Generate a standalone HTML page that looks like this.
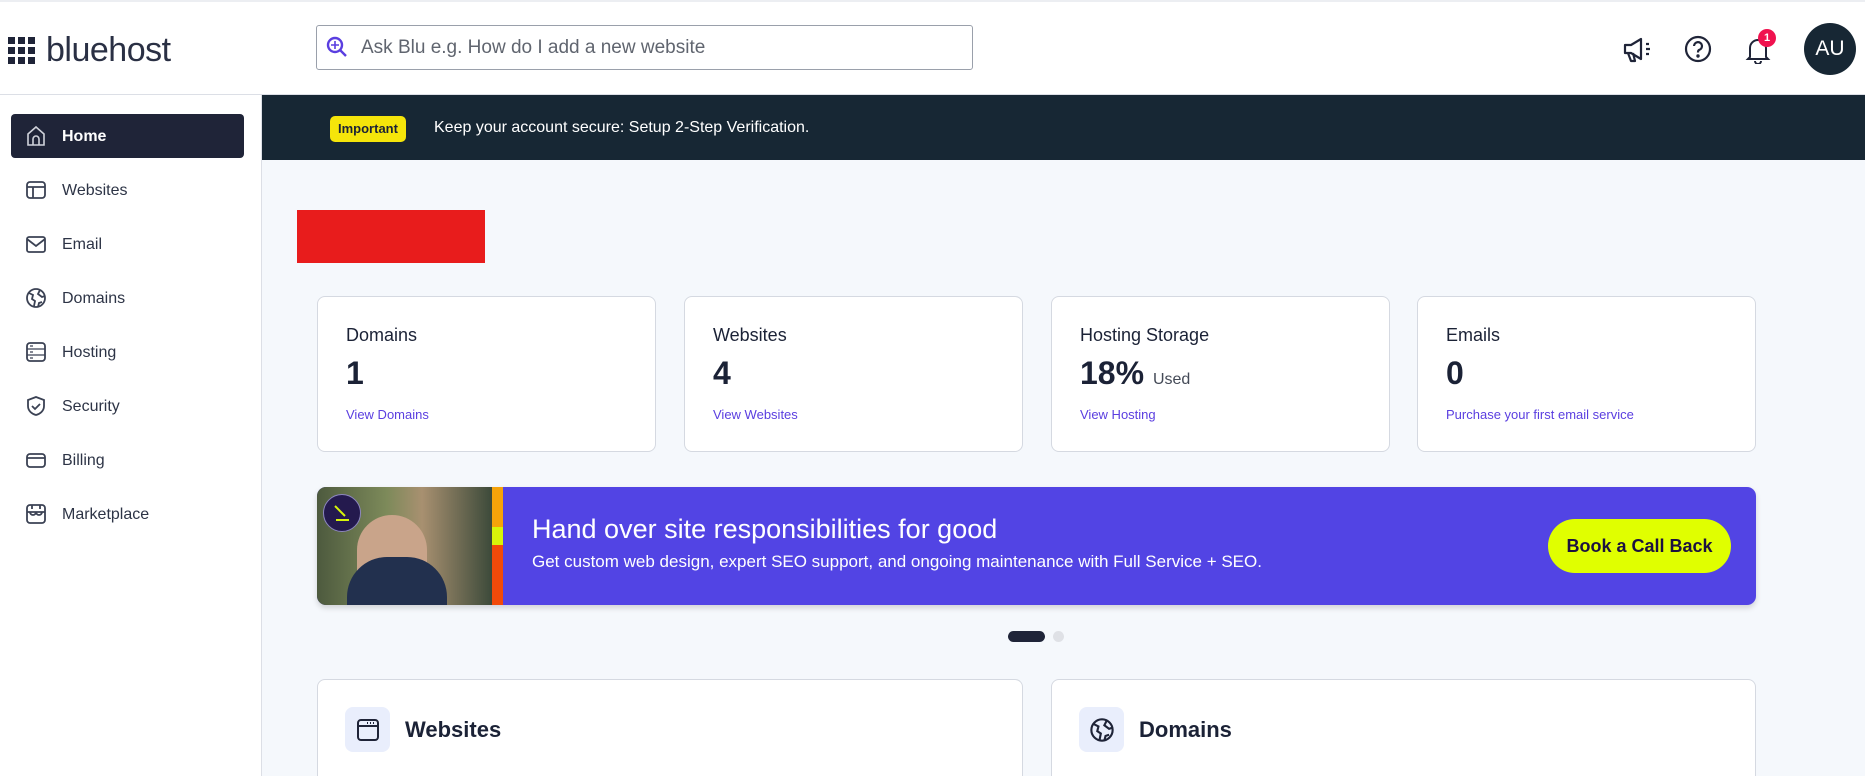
<!DOCTYPE html>
<html style="width:1865px;height:776px;overflow:hidden"><head><meta charset="utf-8">
<style>
*{box-sizing:border-box;margin:0;padding:0}
body{width:1865px;height:776px;overflow:hidden;background:#f5f8fc;font-family:"Liberation Sans",sans-serif;color:#1b2236;position:relative}
.hdr{position:absolute;left:0;top:0;width:1865px;height:95px;background:#fff;border-top:2px solid #eceef2;border-bottom:1px solid #dcdfe6}
.side{position:absolute;left:0;top:95px;width:262px;height:681px;background:#fff;border-right:1px solid #dcdfe6}
.nav{position:absolute;left:11px;width:233px;height:44px;border-radius:4px;font-size:16px;color:#2d3446}
.nav svg{position:absolute;left:14px;top:11px}
.nav span{position:absolute;left:51px;top:14px}
.nav.on{background:#1f2438;color:#fff;font-weight:bold}
.card{position:absolute;background:#fff;border:1px solid #d5d9e1;border-radius:8px}
.ct{position:absolute;left:28px;top:28px;font-size:18px;color:#1b2236}
.cn{position:absolute;left:28px;top:58px;font-size:32px;font-weight:bold;color:#1b2236}
.cl{position:absolute;left:28px;top:110px;font-size:13px;color:#5a3ee0}
</style></head><body>
<div class="hdr">
  <svg style="position:absolute;left:8px;top:35px" width="28" height="28" viewBox="0 0 28 28" fill="#1f2438">
    <rect x="0" y="0" width="7" height="7"/><rect x="10" y="0" width="7" height="7"/><rect x="20" y="0" width="7" height="7"/>
    <rect x="0" y="10" width="7" height="7"/><rect x="10" y="10" width="7" height="7"/><rect x="20" y="10" width="7" height="7"/>
    <rect x="0" y="20" width="7" height="7"/><rect x="10" y="20" width="7" height="7"/><rect x="20" y="20" width="7" height="7"/>
  </svg>
  <div style="position:absolute;left:46px;top:29px;font-size:34px;color:#2a3044;letter-spacing:-0.5px">bluehost</div>
  <div style="position:absolute;left:316px;top:23px;width:657px;height:45px;border:1px solid #9aa0ab;border-radius:3px">
    <svg style="position:absolute;left:9px;top:10px" width="22" height="22" viewBox="0 0 22 22" fill="none" stroke="#5a3ee0" stroke-width="2.4"><circle cx="9" cy="9" r="7"/><path d="M14 14l6 6"/><path d="M9 5v8M5 9h8" stroke-width="1.6"/></svg>
    <div style="position:absolute;left:44px;top:11px;font-size:19px;color:#60656f">Ask Blu e.g. How do I add a new website</div>
  </div>
  <svg style="position:absolute;left:1623px;top:34px" width="30" height="28" viewBox="0 0 30 28" fill="none" stroke="#1f2438" stroke-width="2.2" stroke-linejoin="round"><path d="M2 9h6l10-6v20L8 17H2z"/><path d="M5 17l3 8h4l-2-8"/><path d="M23 8h3M23 13h4M23 18h3"/></svg>
  <svg style="position:absolute;left:1684px;top:33px" width="28" height="28" viewBox="0 0 28 28" fill="none" stroke="#1f2438" stroke-width="2.2"><circle cx="14" cy="14" r="12"/><path d="M10 11a4 4 0 1 1 5 4c-1 .5-1 1.5-1 2.5"/><circle cx="14" cy="21" r=".6" fill="#1f2438"/></svg>
  <svg style="position:absolute;left:1745px;top:34px" width="26" height="28" viewBox="0 0 26 28" fill="none" stroke="#1f2438" stroke-width="2"><path d="M5 21V12a8 8 0 0 1 16 0v9l2 2H3z"/><path d="M10 25a3 3 0 0 0 6 0"/></svg>
  <div style="position:absolute;left:1758px;top:27px;width:18px;height:18px;border-radius:50%;background:#f0124f;color:#fff;font-size:11px;font-weight:bold;text-align:center;line-height:18px">1</div>
  <div style="position:absolute;left:1804px;top:21px;width:52px;height:52px;border-radius:50%;background:#172734;color:#fff;font-size:21px;text-align:center;line-height:52px">AU</div>
</div>
<div class="side">
  <div class="nav on" style="top:19px"><svg width="22" height="22" viewBox="0 0 22 22" fill="none" stroke="#cfd2da" stroke-width="1.6"><path d="M3 20V9l8-7 8 7v11z"/><path d="M8 20v-6a3 3 0 0 1 6 0v6"/></svg><span>Home</span></div>
  <div class="nav" style="top:73px"><svg width="22" height="22" viewBox="0 0 22 22" fill="none" stroke="#3b4254" stroke-width="1.8"><rect x="2" y="3" width="18" height="16" rx="3"/><path d="M2 8h18M8 8v11"/></svg><span>Websites</span></div>
  <div class="nav" style="top:127px"><svg width="22" height="22" viewBox="0 0 22 22" fill="none" stroke="#3b4254" stroke-width="1.8"><rect x="2" y="4" width="18" height="15" rx="2"/><path d="M2 6l9 7 9-7"/></svg><span>Email</span></div>
  <div class="nav" style="top:181px"><svg width="22" height="22" viewBox="0 0 22 22" fill="none" stroke="#3b4254" stroke-width="1.8"><circle cx="11" cy="11" r="9"/><path d="M4 6l4 2-1 4 3 2-1 5M15 3l-2 4 4 3 3-1M13 20l1-4 3-1"/></svg><span>Domains</span></div>
  <div class="nav" style="top:235px"><svg width="22" height="22" viewBox="0 0 22 22" fill="none" stroke="#3b4254" stroke-width="1.8"><rect x="2" y="2" width="18" height="18" rx="3"/><path d="M2 8h18M2 14h18M5 5h3M5 11h3M5 17h3" stroke-width="1.2"/></svg><span>Hosting</span></div>
  <div class="nav" style="top:289px"><svg width="22" height="22" viewBox="0 0 22 22" fill="none" stroke="#3b4254" stroke-width="1.8"><path d="M11 2l8 3v6c0 5-4 8-8 9-4-1-8-4-8-9V5z"/><path d="M7 11l3 3 5-5"/></svg><span>Security</span></div>
  <div class="nav" style="top:343px"><svg width="22" height="22" viewBox="0 0 22 22" fill="none" stroke="#3b4254" stroke-width="1.8"><rect x="2" y="5" width="18" height="13" rx="3"/><path d="M2 9h18"/></svg><span>Billing</span></div>
  <div class="nav" style="top:397px"><svg width="22" height="22" viewBox="0 0 22 22" fill="none" stroke="#3b4254" stroke-width="1.8"><rect x="2" y="2" width="18" height="18" rx="3"/><path d="M2 9h18M5 9a3 3 0 0 0 6 0 3 3 0 0 0 6 0M7 2v4M15 2v4"/></svg><span>Marketplace</span></div>
</div>
<div style="position:absolute;left:262px;top:95px;width:1603px;height:65px;background:#172734">
  <div style="position:absolute;left:68px;top:21px;height:26px;padding:0 8px;background:#f5e50a;border-radius:5px;font-size:13px;font-weight:bold;color:#1b2236;line-height:26px">Important</div>
  <div style="position:absolute;left:172px;top:24px;font-size:16px;color:#fff">Keep your account secure: Setup 2-Step Verification.</div>
</div>
<div style="position:absolute;left:297px;top:210px;width:188px;height:53px;background:#e81c1c"></div>

<div class="card" style="left:317px;top:296px;width:339px;height:156px"><div class="ct">Domains</div><div class="cn">1</div><div class="cl">View Domains</div></div>
<div class="card" style="left:684px;top:296px;width:339px;height:156px"><div class="ct">Websites</div><div class="cn">4</div><div class="cl">View Websites</div></div>
<div class="card" style="left:1051px;top:296px;width:339px;height:156px"><div class="ct">Hosting Storage</div><div class="cn">18% <span style="font-size:16px;font-weight:normal;color:#444a57">Used</span></div><div class="cl">View Hosting</div></div>
<div class="card" style="left:1417px;top:296px;width:339px;height:156px"><div class="ct">Emails</div><div class="cn">0</div><div class="cl">Purchase your first email service</div></div>

<div style="position:absolute;left:317px;top:487px;width:1439px;height:118px;background:#5244e4;border-radius:9px;overflow:hidden;box-shadow:0 3px 6px rgba(0,0,0,.15)">
  <div style="position:absolute;left:0;top:0;width:175px;height:118px;background:linear-gradient(90deg,#4d5a3e,#7d8a5a 40%,#a89070 60%,#3c4a3a)"></div>
  <div style="position:absolute;left:40px;top:28px;width:70px;height:90px;border-radius:35px 35px 10px 10px;background:#c9a48a"></div>
  <div style="position:absolute;left:30px;top:70px;width:100px;height:48px;border-radius:40px 40px 0 0;background:#22304e"></div>
  <div style="position:absolute;left:6px;top:7px;width:38px;height:38px;border-radius:50%;background:#241a4e;border:1px solid #8c86c0"></div>
  <svg style="position:absolute;left:15px;top:16px" width="20" height="20" viewBox="0 0 20 20" fill="none" stroke="#d7f50a" stroke-width="2"><path d="M3 3l10 10M4 17h13"/></svg>
  <div style="position:absolute;left:175px;top:0;width:11px;height:40px;background:#f5a30a"></div>
  <div style="position:absolute;left:175px;top:40px;width:11px;height:18px;background:#d7f50a"></div>
  <div style="position:absolute;left:175px;top:58px;width:11px;height:60px;background:#f24a0a"></div>
  <div style="position:absolute;left:215px;top:27px;font-size:27px;color:#fff">Hand over site responsibilities for good</div>
  <div style="position:absolute;left:215px;top:65px;font-size:17px;color:#fff">Get custom web design, expert SEO support, and ongoing maintenance with Full Service + SEO.</div>
  <div style="position:absolute;left:1231px;top:32px;width:183px;height:54px;border-radius:27px;background:#e0ff00;color:#1c1140;font-size:18px;font-weight:bold;text-align:center;line-height:54px">Book a Call Back</div>
</div>
<div style="position:absolute;left:1008px;top:631px;width:37px;height:11px;border-radius:6px;background:#1f2438"></div>
<div style="position:absolute;left:1053px;top:631px;width:11px;height:11px;border-radius:50%;background:#dfe1e6"></div>

<div class="card" style="left:317px;top:679px;width:706px;height:110px">
  <div style="position:absolute;left:27px;top:27px;width:45px;height:45px;border-radius:8px;background:#e9eefc"></div>
  <svg style="position:absolute;left:38px;top:38px" width="24" height="24" viewBox="0 0 24 24" fill="none" stroke="#1f2438" stroke-width="2"><rect x="2" y="2" width="20" height="20" rx="3"/><path d="M2 8h20"/><path d="M14 5h1M17 5h1M11 5h1" stroke-width="2"/></svg>
  <div style="position:absolute;left:87px;top:37px;font-size:22px;font-weight:bold;color:#1b2236">Websites</div>
</div>
<div class="card" style="left:1051px;top:679px;width:705px;height:110px">
  <div style="position:absolute;left:27px;top:27px;width:45px;height:45px;border-radius:8px;background:#e9eefc"></div>
  <svg style="position:absolute;left:37px;top:37px" width="26" height="26" viewBox="0 0 22 22" fill="none" stroke="#1f2438" stroke-width="1.8"><circle cx="11" cy="11" r="9"/><path d="M4 6l4 2-1 4 3 2-1 5M15 3l-2 4 4 3 3-1M13 20l1-4 3-1"/></svg>
  <div style="position:absolute;left:87px;top:37px;font-size:22px;font-weight:bold;color:#1b2236">Domains</div>
</div>
</body></html>
